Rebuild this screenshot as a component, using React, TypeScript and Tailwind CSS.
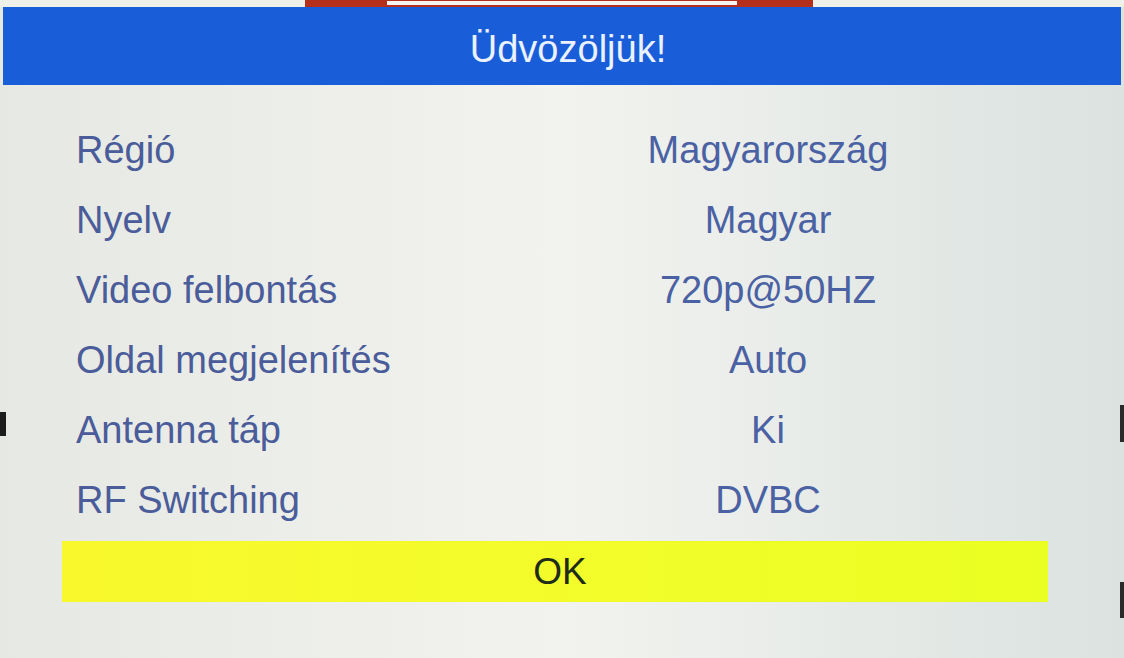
import React from "react";

const rows: [string, string][] = [
  ["Régió", "Magyarország"],
  ["Nyelv", "Magyar"],
  ["Video felbontás", "720p@50HZ"],
  ["Oldal megjelenítés", "Auto"],
  ["Antenna táp", "Ki"],
  ["RF Switching", "DVBC"],
];

export default function App() {
  return (
    <div
      className="relative w-[1124px] h-[658px] overflow-hidden bg-linear-to-r from-[#e6e8e3] via-[#f2f3ef] to-[#dbe2e0]"
      style={{ fontFamily: '"Liberation Sans", Arial, sans-serif' }}
    >
      {/* top strip */}
      <div className="h-[7px] flex bg-[#eef0ea]">
        <div className="ml-[305px] w-[508px] h-[7px] bg-[#b5301c] flex pt-[1px]">
          <div className="ml-[82px] w-[350px] h-[4px] bg-[#f6f4f0]" />
        </div>
      </div>

      {/* header */}
      <div className="mx-[3px] h-[78px] bg-[#1a5dd8] flex justify-center pt-[23px]">
        <span className="text-[38px] leading-[38px] text-[#eaf1ff] pl-[12px]">Üdvözöljük!</span>
      </div>

      {/* rows */}
      <div className="mt-[30px] flex flex-col">
        {rows.map(([label, value]) => (
          <div key={label} className="flex h-[70px] items-center text-[38px] leading-[70px] text-[#4a5c9a]">
            <div className="w-[568px] pl-[76px] whitespace-nowrap">{label}</div>
            <div className="w-[400px] text-center whitespace-nowrap text-[#4a61a3]">{value}</div>
          </div>
        ))}
      </div>

      {/* OK bar */}
      <div className="mt-[6px] ml-[62px] w-[986px] h-[61px] bg-linear-to-r from-[#f8f82c] via-[#f3fc2a] to-[#eaff22] flex items-center justify-center">
        <span className="text-[37px] leading-[37px] text-[#1e2c18] ml-[10px]">OK</span>
      </div>

      {/* bezel artifacts */}
      <div className="absolute left-0 top-[412px] w-[6px] h-[24px] bg-[#1c1c1c]" />
      <div className="absolute right-0 top-[405px] w-[4px] h-[37px] bg-[#2a2a2a]" />
      <div className="absolute right-0 top-[582px] w-[4px] h-[36px] bg-[#2a2a2a]" />
    </div>
  );
}
